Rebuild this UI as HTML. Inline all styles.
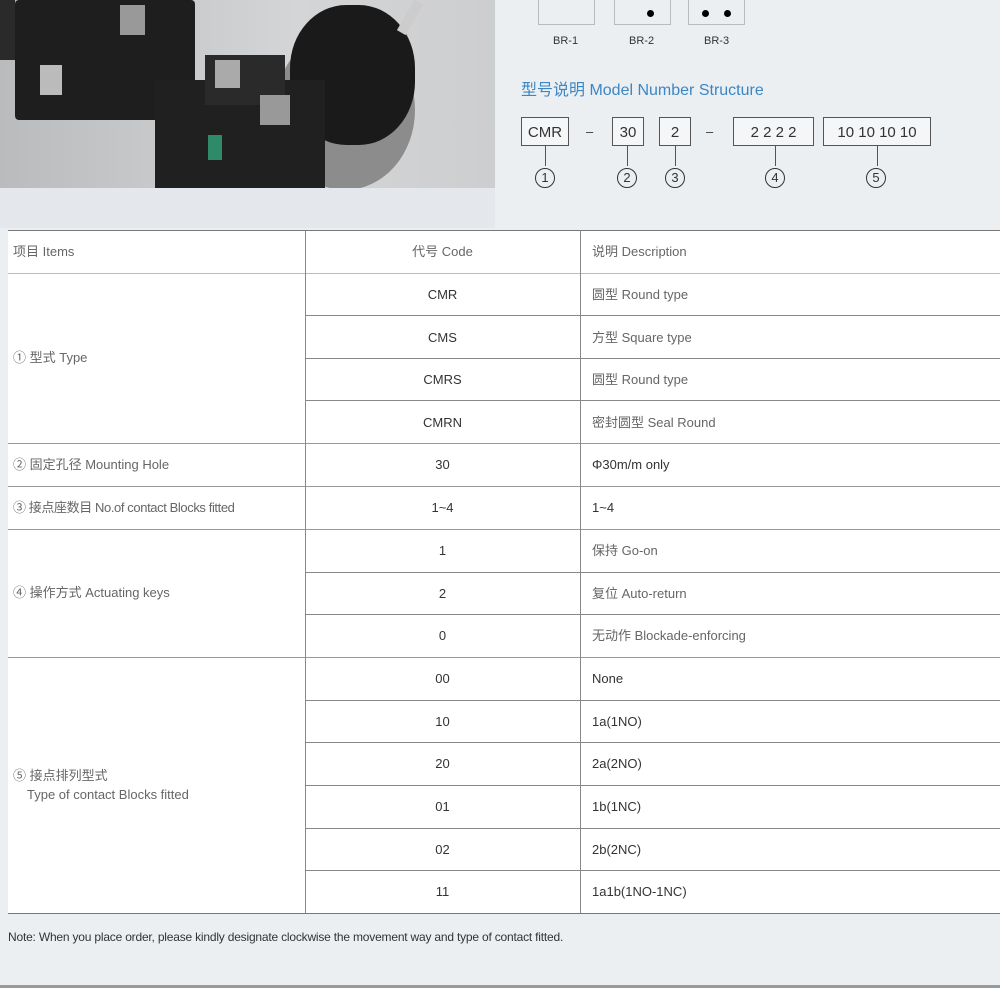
<!DOCTYPE html><html><head><meta charset="utf-8"><style>
body{margin:0;width:1000px;height:1000px;background:#eceff2;position:relative;overflow:hidden;font-family:"Liberation Sans","Noto Sans CJK SC",sans-serif;color:#555}
.a{position:absolute}
.h{position:absolute;left:8px;right:0;height:1px;background:#999}
.v{position:absolute;width:1px;background:#888}
.t{position:absolute;font-size:13px;color:#666;white-space:nowrap;line-height:16px}
.c{position:absolute;font-size:13px;color:#333;text-align:center;width:275px;left:305px;line-height:16px}
.d{position:absolute;font-size:13px;color:#666;left:592px;line-height:16px;white-space:nowrap}
.box{position:absolute;border:1.5px solid #555;height:29px;top:117px;font-size:15px;color:#333;text-align:center;line-height:29px;box-sizing:border-box;background:#f5f6f7}
.ci{position:absolute;top:168px;width:18px;height:18px;border:1.3px solid #333;border-radius:50%;font-size:13px;text-align:center;line-height:18px;color:#333}
.ln{position:absolute;width:1px;height:20px;top:146px;background:#555}
</style></head><body>
<div class="a" style="left:0;top:0;width:495px;height:188px;background:linear-gradient(90deg,#b9bbbd,#d4d5d6 60%,#cdcecf)"></div>
<div class="a" style="left:15px;top:0;width:180px;height:120px;background:#1e1e1e;border-radius:4px"></div>
<div class="a" style="left:0;top:0;width:15px;height:60px;background:#2a2a2a"></div>
<div class="a" style="left:40px;top:65px;width:22px;height:30px;background:#bbb"></div>
<div class="a" style="left:120px;top:5px;width:25px;height:30px;background:#999"></div>
<div class="a" style="left:275px;top:30px;width:140px;height:160px;background:#8c8c8c;border-radius:50%"></div>
<div class="a" style="left:290px;top:5px;width:125px;height:140px;background:#1a1a1a;border-radius:45%"></div>
<div class="a" style="left:405px;top:0;width:10px;height:35px;background:#ccc;transform:rotate(30deg)"></div>
<div class="a" style="left:155px;top:80px;width:170px;height:108px;background:#202020"></div>
<div class="a" style="left:205px;top:55px;width:80px;height:50px;background:#2a2a2a"></div>
<div class="a" style="left:215px;top:60px;width:25px;height:28px;background:#aaa"></div>
<div class="a" style="left:260px;top:95px;width:30px;height:30px;background:#999"></div>
<div class="a" style="left:208px;top:135px;width:14px;height:25px;background:#2f8a6a"></div>
<div class="a" style="left:0;top:188px;width:495px;height:40px;background:#e4e8ec"></div>
<div class="a" style="left:538px;top:0;width:55px;height:24px;border:1px solid #bbb;border-top:none"></div>
<div class="a" style="left:614px;top:0;width:55px;height:24px;border:1px solid #bbb;border-top:none"></div>
<div class="a" style="left:688px;top:0;width:55px;height:24px;border:1px solid #bbb;border-top:none"></div>
<div class="a" style="left:647px;top:10px;width:7px;height:7px;background:#000;border-radius:50%"></div>
<div class="a" style="left:702px;top:10px;width:7px;height:7px;background:#000;border-radius:50%"></div>
<div class="a" style="left:724px;top:10px;width:7px;height:7px;background:#000;border-radius:50%"></div>
<div class="t" style="left:553px;top:33px;font-size:11px;color:#333">BR-1</div>
<div class="t" style="left:629px;top:33px;font-size:11px;color:#333">BR-2</div>
<div class="t" style="left:704px;top:33px;font-size:11px;color:#333">BR-3</div>
<div class="t" style="left:521px;top:81px;font-size:16px;line-height:20px;color:#3b86c4">型号说明 Model Number Structure</div>
<div class="box" style="left:521px;width:48px">CMR</div>
<div class="t" style="left:586px;top:124px;color:#333">–</div>
<div class="box" style="left:612px;width:32px">30</div>
<div class="box" style="left:659px;width:32px">2</div>
<div class="t" style="left:706px;top:124px;color:#333">–</div>
<div class="box" style="left:733px;width:81px">2 2 2 2</div>
<div class="box" style="left:823px;width:108px">10 10 10 10</div>
<div class="ln" style="left:545px"></div><div class="ln" style="left:627px"></div><div class="ln" style="left:675px"></div><div class="ln" style="left:775px"></div><div class="ln" style="left:877px"></div>
<div class="ci" style="left:535px">1</div><div class="ci" style="left:617px">2</div><div class="ci" style="left:665px">3</div><div class="ci" style="left:765px">4</div><div class="ci" style="left:866px">5</div>
<div class="a" style="left:8px;top:230px;right:0;height:683px;background:#fff"></div>
<div class="h" style="top:230px;background:#777"></div>
<div class="h" style="top:273px;background:#bbb"></div>
<div class="h" style="top:443px"></div><div class="h" style="top:486px"></div><div class="h" style="top:529px"></div><div class="h" style="top:657px"></div>
<div class="h" style="top:913px;background:#777"></div>
<div class="a" style="left:305px;right:0;top:315px;height:1px;background:#888"></div>
<div class="a" style="left:305px;right:0;top:358px;height:1px;background:#888"></div>
<div class="a" style="left:305px;right:0;top:400px;height:1px;background:#888"></div>
<div class="a" style="left:305px;right:0;top:572px;height:1px;background:#888"></div>
<div class="a" style="left:305px;right:0;top:614px;height:1px;background:#888"></div>
<div class="a" style="left:305px;right:0;top:700px;height:1px;background:#888"></div>
<div class="a" style="left:305px;right:0;top:742px;height:1px;background:#888"></div>
<div class="a" style="left:305px;right:0;top:785px;height:1px;background:#888"></div>
<div class="a" style="left:305px;right:0;top:828px;height:1px;background:#888"></div>
<div class="a" style="left:305px;right:0;top:870px;height:1px;background:#888"></div>
<div class="v" style="left:305px;top:230px;height:683px"></div>
<div class="v" style="left:580px;top:230px;height:683px"></div>
<div class="t" style="left:13px;top:244px">项目 Items</div>
<div class="t" style="left:13px;top:350px">① 型式 Type</div>
<div class="t" style="left:13px;top:457px">② 固定孔径 Mounting Hole</div>
<div class="t" style="left:13px;top:500px;letter-spacing:-0.4px">③ 接点座数目 No.of contact Blocks fitted</div>
<div class="t" style="left:13px;top:585px">④ 操作方式 Actuating keys</div>
<div class="t" style="left:13px;top:768px">⑤ 接点排列型式</div>
<div class="t" style="left:27px;top:787px">Type of contact Blocks fitted</div>
<div class="c" style="top:244px;color:#666">代号 Code</div>
<div class="d" style="top:244px">说明 Description</div>
<div class="c" style="top:287px">CMR</div><div class="d" style="top:287px">圆型 Round type</div>
<div class="c" style="top:330px">CMS</div><div class="d" style="top:330px">方型 Square type</div>
<div class="c" style="top:372px">CMRS</div><div class="d" style="top:372px">圆型 Round type</div>
<div class="c" style="top:415px">CMRN</div><div class="d" style="top:415px">密封圆型 Seal Round</div>
<div class="c" style="top:457px">30</div><div class="d" style="top:457px;color:#333">Φ30m/m only</div>
<div class="c" style="top:500px">1~4</div><div class="d" style="top:500px;color:#333">1~4</div>
<div class="c" style="top:543px">1</div><div class="d" style="top:543px">保持 Go-on</div>
<div class="c" style="top:586px">2</div><div class="d" style="top:586px">复位 Auto-return</div>
<div class="c" style="top:628px">0</div><div class="d" style="top:628px">无动作 Blockade-enforcing</div>
<div class="c" style="top:671px">00</div><div class="d" style="top:671px;color:#333">None</div>
<div class="c" style="top:714px">10</div><div class="d" style="top:714px;color:#333">1a(1NO)</div>
<div class="c" style="top:756px">20</div><div class="d" style="top:756px;color:#333">2a(2NO)</div>
<div class="c" style="top:799px">01</div><div class="d" style="top:799px;color:#333">1b(1NC)</div>
<div class="c" style="top:842px">02</div><div class="d" style="top:842px;color:#333">2b(2NC)</div>
<div class="c" style="top:884px">11</div><div class="d" style="top:884px;color:#333">1a1b(1NO-1NC)</div>
<div class="t" style="left:8px;top:929px;font-size:12px;color:#333;letter-spacing:-0.2px">Note: When you place order, please kindly designate clockwise the movement way and type of contact fitted.</div>
<div class="a" style="left:0;right:0;top:985px;height:3px;background:#999"></div>
<div class="a" style="left:0;right:0;top:988px;height:12px;background:#fff"></div>
</body></html>
